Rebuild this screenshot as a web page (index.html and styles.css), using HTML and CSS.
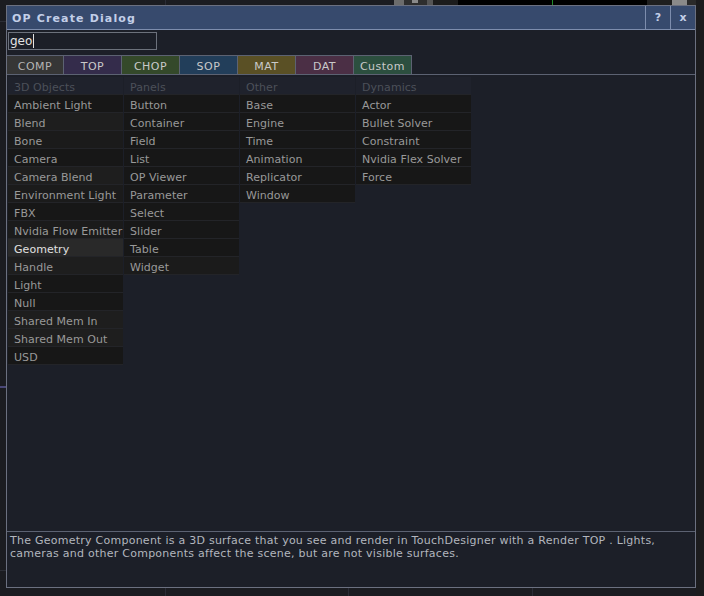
FILE: index.html
```html
<!DOCTYPE html>
<html>
<head>
<meta charset="utf-8">
<link rel="stylesheet" href="styles.css">
</head>
<body>
<div class="desk">
  <div class="bg bg-v1"></div>
  <div class="bg bg-v2"></div>
  <div class="bg bg-v3"></div>
  <div class="bg bg-hl1"></div>
  <div class="bg bg-hl2"></div>
  <div class="bg bg-hr2"></div>
  <div class="bg bg-hl3"></div>
  <div class="bg bg-hr3"></div>
  <div class="bg bg-rstrip"></div>
  <div class="bg t1"></div>
  <div class="bg t2"></div>
  <div class="bg t3"></div>
  <div class="bg t4"></div>
  <div class="bg t5"></div>
  <div class="bg t6"></div>
  <div class="bg t7"></div>
  <div class="bg t8"></div>
  <div class="bg t9"></div>
  <div class="bg tdot"></div>

  <div class="dialog">
    <div class="titlebar">
      <div class="title">OP Create Dialog</div>
      <div class="tbtn">?</div>
      <div class="tbtn">x</div>
    </div>
    <div class="searchrow">
      <div class="search">geo<span class="caret"></span></div>
    </div>
    <div class="tabs">
      <div class="tab comp">COMP</div>
      <div class="tab top">TOP</div>
      <div class="tab chop">CHOP</div>
      <div class="tab sop">SOP</div>
      <div class="tab mat">MAT</div>
      <div class="tab dat">DAT</div>
      <div class="tab custom">Custom</div>
    </div>
    <div class="lists">
      <div class="col">
        <div class="hd">3D Objects</div>
        <div class="it">Ambient Light</div>
        <div class="it lt">Blend</div>
        <div class="it md">Bone</div>
        <div class="it">Camera</div>
        <div class="it lt">Camera Blend</div>
        <div class="it md">Environment Light</div>
        <div class="it">FBX</div>
        <div class="it md">Nvidia Flow Emitter</div>
        <div class="it sel">Geometry</div>
        <div class="it lt">Handle</div>
        <div class="it">Light</div>
        <div class="it">Null</div>
        <div class="it lt">Shared Mem In</div>
        <div class="it lt">Shared Mem Out</div>
        <div class="it">USD</div>
      </div>
      <div class="col">
        <div class="hd">Panels</div>
        <div class="it">Button</div>
        <div class="it">Container</div>
        <div class="it">Field</div>
        <div class="it">List</div>
        <div class="it">OP Viewer</div>
        <div class="it">Parameter</div>
        <div class="it">Select</div>
        <div class="it">Slider</div>
        <div class="it">Table</div>
        <div class="it md">Widget</div>
      </div>
      <div class="col">
        <div class="hd">Other</div>
        <div class="it">Base</div>
        <div class="it">Engine</div>
        <div class="it">Time</div>
        <div class="it">Animation</div>
        <div class="it">Replicator</div>
        <div class="it">Window</div>
      </div>
      <div class="col">
        <div class="hd">Dynamics</div>
        <div class="it">Actor</div>
        <div class="it">Bullet Solver</div>
        <div class="it">Constraint</div>
        <div class="it">Nvidia Flex Solver</div>
        <div class="it">Force</div>
      </div>
    </div>
    <div class="desc">The Geometry Component is a 3D surface that you see and render in TouchDesigner with a Render TOP . Lights, cameras and other Components affect the scene, but are not visible surfaces.</div>
  </div>
</div>
</body>
</html>
```

FILE: styles.css
```css
html, body {
  margin: 0;
  padding: 0;
  background: #1b1c21;
}
body {
  font-family: "DejaVu Sans", Verdana, sans-serif;
  font-size: 11px;
}
.desk {
  position: relative;
  width: 704px;
  height: 596px;
  overflow: hidden;
  background: #1b1c21;
}
.bg { position: absolute; }
.bg-v1 { left: 165px; top: 0; width: 1px; height: 596px; background: #2a2c36; }
.bg-v2 { left: 348px; top: 560px; width: 1px; height: 36px; background: #2a2c36; }
.bg-v3 { left: 532px; top: 560px; width: 1px; height: 36px; background: #2a2c36; }
.bg-hl1 { left: 0; top: 21px; width: 6px; height: 1px; background: #2c2e36; }
.bg-hl2 { left: 0; top: 386px; width: 6px; height: 2px; background: #4a4878; }
.bg-hr2 { left: 696px; top: 386px; width: 8px; height: 2px; background: #4a4878; }
.bg-hl3 { left: 0; top: 570px; width: 6px; height: 1px; background: #2c2e36; }
.bg-hr3 { left: 696px; top: 570px; width: 8px; height: 1px; background: #2c2e36; }
.bg-rstrip { left: 696px; top: 0; width: 8px; height: 596px; background: #1c1c1e; }
.t1 { left: 394px; top: 0; width: 10px; height: 5px; background: #6c6c6c; }
.t2 { left: 404px; top: 0; width: 23px; height: 5px; background: #2e2e2e; }
.tdot { left: 412px; top: 0; width: 6px; height: 3px; background: #8a8a8a; }
.t3 { left: 427px; top: 0; width: 6px; height: 5px; background: #555555; }
.t4 { left: 433px; top: 0; width: 25px; height: 5px; background: #1c1c1c; }
.t5 { left: 458px; top: 0; width: 189px; height: 5px; background: #000000; }
.t6 { left: 552px; top: 0; width: 1px; height: 5px; background: #1f8a2a; }
.t7 { left: 647px; top: 0; width: 25px; height: 5px; background: #1f1f1f; }
.t8 { left: 672px; top: 0; width: 15px; height: 5px; background: #8a8a8a; }
.t9 { left: 687px; top: 0; width: 9px; height: 5px; background: #2a2a2a; }

.dialog {
  position: absolute;
  left: 6px;
  top: 5px;
  width: 688px;
  height: 581px;
  border: 1px solid #6b7080;
  background: #1c1f28;
  display: flex;
  flex-direction: column;
}
.titlebar {
  height: 23px;
  background: #374a6d;
  border-bottom: 1px solid #7d8dad;
  display: flex;
  align-items: stretch;
  flex: none;
}
.title {
  flex: 1;
  padding: 1px 0 0 5px;
  line-height: 23px;
  font-weight: bold;
  color: #c3cfe8;
  letter-spacing: 1.15px;
}
.tbtn {
  width: 24px;
  border-left: 1px solid #7d8dad;
  color: #c3cfe8;
  font-weight: bold;
  text-align: center;
  line-height: 24px;
}
.searchrow {
  flex: none;
  padding: 2px 0 0 1px;
  height: 25px;
  box-sizing: border-box;
}
.search {
  width: 146px;
  height: 16px;
  border: 1px solid #6c717c;
  color: #e2e2e2;
  font-size: 12px;
  line-height: 16px;
  padding-left: 1px;
  display: flex;
  align-items: center;
}
.caret {
  display: inline-block;
  width: 1px;
  height: 14px;
  background: #e2e2e2;
  margin-left: 1px;
}
.tabs {
  flex: none;
  display: flex;
  height: 19px;
  border-bottom: 1px solid #5c6272;
}
.tab {
  width: 57px;
  height: 18px;
  border-top: 1px solid #5c6272;
  border-right: 1px solid #5c6272;
  color: #c9c9c9;
  text-align: center;
  line-height: 21px;
  letter-spacing: 0.5px;
}
.tab.comp { width: 56px; background: #363636; color: #b4b4b4; }
.tab.top { background: #342c4b; }
.tab.chop { background: #34492a; }
.tab.sop { background: #223e5a; }
.tab.mat { background: #5a5025; }
.tab.dat { background: #4b2f45; }
.tab.custom { background: #2c4f3f; }

.lists {
  flex: 1;
  display: flex;
  align-items: flex-start;
  gap: 1px;
  padding: 2px 0 0 1px;
}
.col {
  width: 115px;
  display: flex;
  flex-direction: column;
  gap: 1px;
  background: #232428;
  padding-bottom: 1px;
}
.hd, .it {
  height: 17px;
  line-height: 21px;
  padding-left: 6px;
  white-space: nowrap;
  overflow: hidden;
  letter-spacing: 0.05px;
}
.hd {
  background: #1f222c;
  color: #4c5059;
}
.it {
  background: #171717;
  color: #999999;
}
.it.md { background: #1b1b1b; }
.it.lt { background: #1e1e1e; }
.it.sel { background: #292929; color: #e0e0e0; }

.desc {
  flex: none;
  height: 56px;
  border-top: 1px solid #5c6272;
  padding: 2px 3px 0 3px;
  color: #b2b6be;
  line-height: 13px;
  letter-spacing: 0.25px;
  box-sizing: border-box;
}
```
